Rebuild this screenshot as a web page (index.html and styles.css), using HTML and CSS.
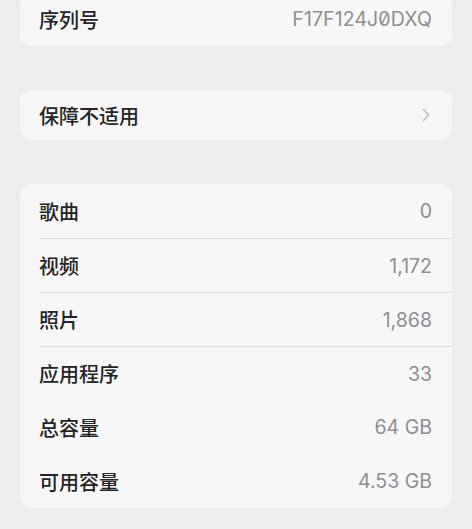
FILE: index.html
```html
<!DOCTYPE html>
<html lang="zh-CN">
<head>
<meta charset="utf-8">
<title>关于本机</title>
<link rel="stylesheet" href="styles.css">
</head>
<body>
<main class="page">
  <section class="card card-top">
    <div class="row">
      <span class="label">序列号</span>
      <span class="value serial">F17F124J0DXQ</span>
    </div>
  </section>

  <section class="card">
    <div class="row row-link">
      <span class="label">保障不适用</span>
      <svg class="chevron" width="8" height="14" viewBox="0 0 8 14" aria-hidden="true">
        <polyline points="1.5,1.5 6.5,7 1.5,12.5" fill="none" stroke="#c4c4c7" stroke-width="1.8" stroke-linecap="round" stroke-linejoin="round"/>
      </svg>
    </div>
  </section>

  <section class="card list">
    <div class="row"><span class="label">歌曲</span><span class="value">0</span></div>
    <div class="row sep"><span class="label">视频</span><span class="value">1,172</span></div>
    <div class="row sep"><span class="label">照片</span><span class="value">1,868</span></div>
    <div class="row sep"><span class="label">应用程序</span><span class="value">33</span></div>
    <div class="row"><span class="label">总容量</span><span class="value">64 GB</span></div>
    <div class="row"><span class="label">可用容量</span><span class="value">4.53 GB</span></div>
  </section>
</main>
</body>
</html>
```

FILE: styles.css
```css
* { box-sizing: border-box; }

html, body {
  margin: 0;
  padding: 0;
  background: #ededf0;
}

body {
  font-family: Inter, "Noto Sans CJK SC", sans-serif;
  -webkit-font-smoothing: antialiased;
}

.page {
  padding: 0 20px;
  display: flex;
  flex-direction: column;
  gap: 44px;
  margin-top: -8px;
}

.card {
  background: #f7f7f8;
  border-radius: 12px;
  overflow: hidden;
}

.row {
  display: flex;
  align-items: center;
  justify-content: space-between;
  height: 54px;
  padding: 0 20px 0 19px;
}

.row-link {
  height: 50px;
  padding-right: 22px;
}

.list .row {
  margin-left: 19px;
  padding-left: 0;
}

.list .row.sep {
  border-top: 1px solid #dedee1;
}

.label {
  font-family: "Noto Sans CJK SC", sans-serif;
  font-size: 20px;
  font-weight: 500;
  color: #242426;
}

.value {
  font-family: Inter, "Noto Sans", sans-serif;
  font-size: 19.5px;
  color: #8e8e93;
}

.serial {
  font-size: 19.5px;
  letter-spacing: 0.1px;
  font-feature-settings: "zero" 1;
}

.chevron {
  display: block;
}
```
